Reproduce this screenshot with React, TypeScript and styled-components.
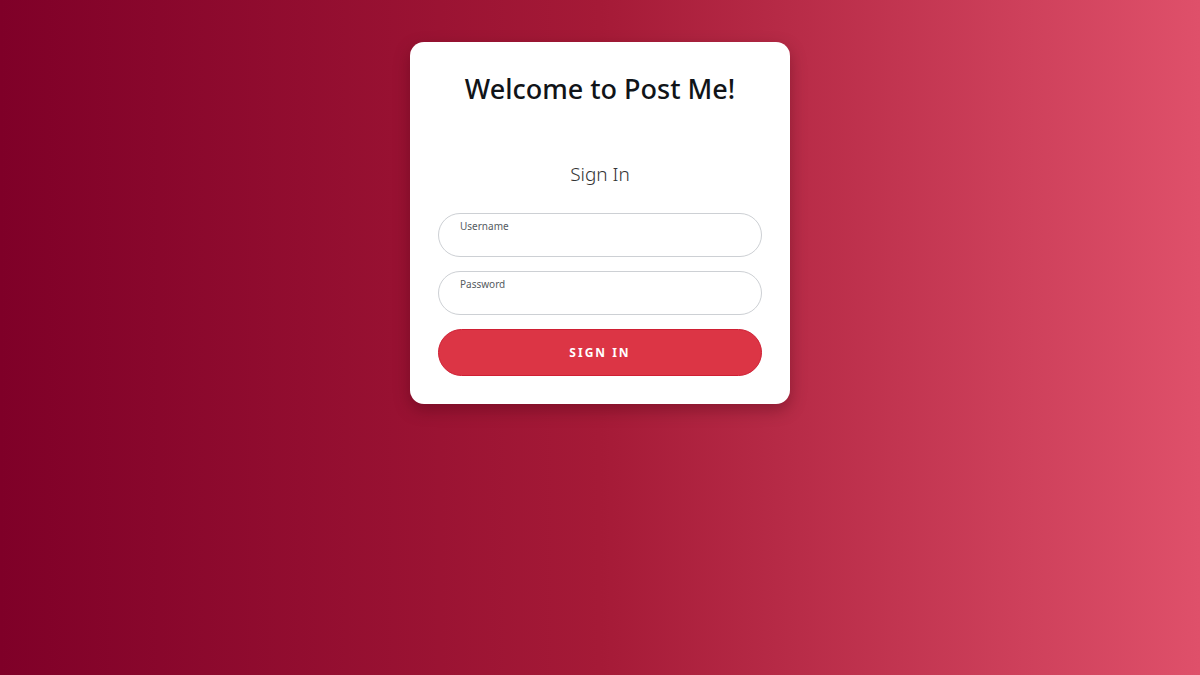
import React from 'react';
import styled, { createGlobalStyle } from 'styled-components';

const GlobalStyle = createGlobalStyle`
  html, body {
    margin: 0;
    padding: 0;
    height: 100%;
  }
  body {
    font-family: 'Noto Sans', 'Open Sans', sans-serif;
  }
  #root {
    height: 100%;
  }
`;

const Page = styled.div`
  width: 100vw;
  height: 100vh;
  background: linear-gradient(90deg, #7f0028 0%, #a51a37 50%, #df506a 100%);
  display: flex;
  justify-content: center;
  align-items: flex-start;
  padding-top: 42px;
  box-sizing: border-box;
`;

const Card = styled.div`
  width: 380px;
  height: 362px;
  box-sizing: border-box;
  background: #ffffff;
  border-radius: 14px;
  box-shadow: 0 6px 16px rgba(60, 0, 15, 0.35);
  padding: 27px 28px 0 28px;
  display: flex;
  flex-direction: column;
  align-items: center;
`;

const Title = styled.h1`
  margin: 0;
  font-size: 27px;
  font-weight: 500;
  color: #111418;
  line-height: 40px;
`;

const Subtitle = styled.h2`
  margin: 51px 0 25px 0;
  font-size: 19px;
  font-weight: 300;
  color: #333333;
  line-height: 28px;
`;

const Form = styled.form`
  width: 100%;
  display: flex;
  flex-direction: column;
  gap: 14px;
`;

const Field = styled.label`
  display: flex;
  flex-direction: column;
  height: 44px;
  box-sizing: border-box;
  border: 1px solid #cdd0d4;
  border-radius: 22px;
  padding: 6px 22px 0 21px;
  background: #fff;
`;

const FieldLabel = styled.span`
  font-size: 10px;
  color: #555b61;
  line-height: 13px;
`;

const Input = styled.input`
  border: none;
  outline: none;
  background: transparent;
  font-size: 13px;
  padding: 0;
  margin: 0;
  font-family: inherit;
`;

const Button = styled.button`
  height: 47px;
  border: 1px solid #cf1f33;
  border-radius: 24px;
  background: #dc3545;
  color: #ffffff;
  font-family: 'Noto Sans', 'Open Sans', sans-serif;
  font-weight: 700;
  font-size: 12px;
  letter-spacing: 2px;
  cursor: pointer;
`;

function App() {
  return (
    <>
      <GlobalStyle />
      <Page>
        <Card>
          <Title>Welcome to Post Me!</Title>
          <Subtitle>Sign In</Subtitle>
          <Form onSubmit={(e) => e.preventDefault()}>
            <Field>
              <FieldLabel>Username</FieldLabel>
              <Input type="text" />
            </Field>
            <Field>
              <FieldLabel>Password</FieldLabel>
              <Input type="password" />
            </Field>
            <Button type="submit">SIGN IN</Button>
          </Form>
        </Card>
      </Page>
    </>
  );
}

export default App;
